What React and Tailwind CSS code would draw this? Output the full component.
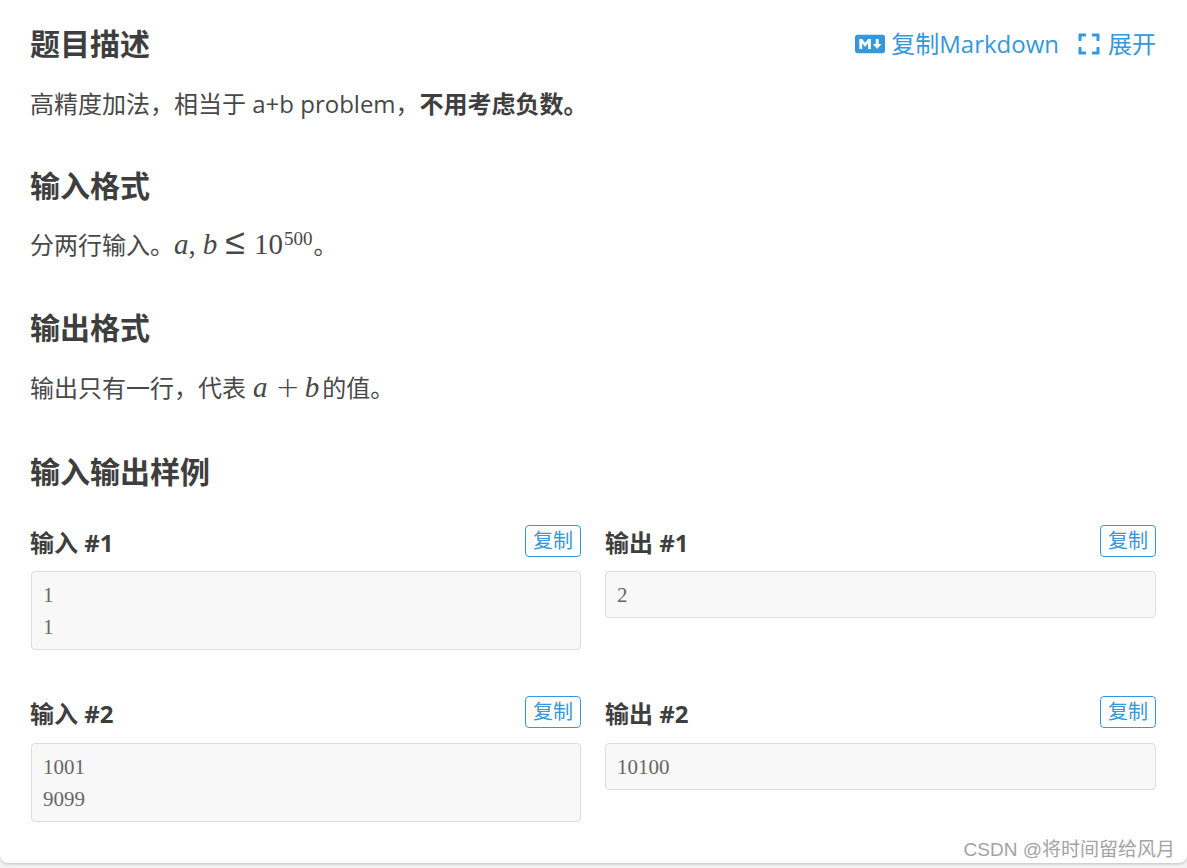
import { FaMarkdown, FaExpand } from 'react-icons/fa'

const sans = 'font-["Open_Sans","Noto_Sans_CJK_SC",sans-serif]'

function Heading({ children, className = '' }) {
  return <h2 className={`text-[30px] leading-[45px] font-bold text-[#3e3e3e] ${className}`}>{children}</h2>
}

function Para({ children, className = '' }) {
  return <p className={`h-9 text-2xl leading-9 ${className}`}>{children}</p>
}

function M({ children, className = '' }) {
  return <span className={`font-["Liberation_Serif",serif] text-[29px] italic ${className}`}>{children}</span>
}

function N({ children, className = '' }) {
  return <span className={`font-["Liberation_Serif",serif] text-[29px] ${className}`}>{children}</span>
}

function Op({ children, className = '' }) {
  return <span className={`font-["DejaVu_Sans",sans-serif] leading-[0px] font-extralight ${className}`}>{children}</span>
}

function Sample({ label, lines, gap = 'mt-[14px]', labelClass = '' }) {
  return (
    <div>
      <div className="flex h-[32px] items-start justify-between">
        <h3 className={`mt-[2px] text-2xl leading-[32px] font-bold text-[#3e3e3e] ${labelClass}`}>{label}</h3>
        <button className="h-[32px] w-[56px] rounded-[4px] border border-[#3498db] pb-[2px] text-center text-xl leading-[21px] text-[#3498db]">
          复制
        </button>
      </div>
      <pre className={`${gap} rounded-[4px] border border-[#dddddd] bg-[#f8f8f8] px-[11px] pt-[7px] pb-[6px] font-["Liberation_Serif",serif] text-[21px] leading-8 text-[#666666]`}>
        {lines.map((l) => (
          <div key={l}>{l}</div>
        ))}
      </pre>
    </div>
  )
}

export default function App() {
  return (
    <div className="h-[868px] overflow-hidden bg-[#f2f2f2]">
      <div className={`relative h-[863px] rounded-b-[8px] bg-white pt-[21px] pr-[31px] pl-[30px] text-[#484848] shadow-[0_1px_3px_rgba(0,0,0,0.2)] ${sans}`}>
        <div className="flex items-center justify-between">
          <Heading>题目描述</Heading>
          <div className="flex items-center text-2xl text-[#3498db]">
            <FaMarkdown className="mr-[6px] h-[30px] w-[30px]" />
            <span>复制Markdown</span>
            <FaExpand className="mr-[7px] ml-[18px] h-[24px] w-[24px]" />
            <span>展开</span>
          </div>
        </div>
        <Para className="mt-[20px]">
          高精度加法，相当于 a+b problem，<strong className="text-[#3e3e3e]">不用考虑负数。</strong>
        </Para>

        <Heading className="mt-[41px]">输入格式</Heading>
        <Para className="mt-[18px]">
          分两行输入。<M>a</M>
          <N>,</N>
          <M className="ml-[7px]">b</M>
          <Op className="ml-[8px] text-[36px]">≤</Op>
          <N className="ml-[9px]">10</N>
          <sup className='ml-px font-["Liberation_Serif",serif] text-[19px]'>500</sup>
          <span className="ml-px">。</span>
        </Para>

        <Heading className="mt-[43px]">输出格式</Heading>
        <Para className="mt-[19px]">
          输出只有一行，代表
          <M className="ml-[7px]">a</M>
          <Op className="ml-[8px] text-[29px]">+</Op>
          <M className="ml-[5px]">b</M>
          <span className="ml-[3px]">的值。</span>
        </Para>

        <Heading className="mt-[44px]">输入输出样例</Heading>

        <div className="mt-[31px] ml-px grid grid-cols-[550px_551px] gap-x-[24px]">
          <Sample label="输入 #1" lines={['1', '1 ']} labelClass="-ml-px" />
          <Sample label="输出 #1" lines={['2']} />
        </div>
        <div className="mt-[46px] ml-px grid grid-cols-[550px_551px] gap-x-[24px]">
          <Sample label="输入 #2" lines={['1001', '9099']} gap="mt-[15px]" labelClass="-ml-px" />
          <Sample label="输出 #2" lines={['10100']} gap="mt-[15px]" />
        </div>

        <div className='absolute right-[12px] -bottom-px font-["Liberation_Sans","Noto_Sans_CJK_SC",sans-serif] text-[19px] leading-7 text-[#a3a3a3]'>
          CSDN @将时间留给风月
        </div>
      </div>
    </div>
  )
}
